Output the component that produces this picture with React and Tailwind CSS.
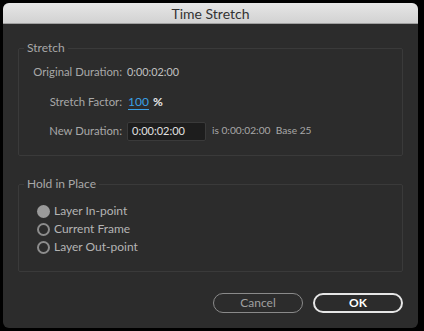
import React from "react";

const font = { fontFamily: "Lato, 'Open Sans', sans-serif" };

function Radio({ checked, label }) {
  return (
    <div className="flex items-center h-[18px]">
      {checked ? (
        <span className="w-[13px] h-[13px] rounded-full bg-[#9a9a9a] shrink-0" />
      ) : (
        <span className="w-[13px] h-[13px] rounded-full border-2 border-[#8c8c8c] shrink-0" />
      )}
      <span className="ml-[4px] text-[12px] text-[#b4b4b4]">{label}</span>
    </div>
  );
}

export default function App() {
  return (
    <div className="w-[424px] h-[331px] bg-black pt-[3px] pl-[3px]" style={font}>
      <div className="w-[415px] h-[325px] bg-[#2c2c2c] rounded-[6px] overflow-hidden flex flex-col">
        <div className="h-[21px] bg-gradient-to-b from-[#e6e6e6] to-[#d2d2d2] border-b border-[#a0a0a0] flex items-center justify-center">
          <span className="text-[14px] text-[#333333]">Time Stretch</span>
        </div>
        <div className="px-[15px] pt-[24px] flex flex-col">
          <div className="relative h-[108px] border border-[#3a3a3a] rounded-[2px]">
            <span className="absolute -top-[9px] left-[5px] px-[3px] bg-[#2c2c2c] text-[12px] text-[#a8a8a8] leading-[16px]">Stretch</span>
            <div className="pt-[15px] flex flex-col">
              <div className="flex items-center h-[16px]">
                <span className="w-[103px] text-right text-[11.3px] text-[#a8a8a8]">Original Duration:</span>
                <span className="ml-[5px] text-[10.8px] text-[#c0c0c0]">0:00:02:00</span>
              </div>
              <div className="flex items-center h-[16px] mt-[14px]">
                <span className="w-[103px] text-right text-[11.3px] text-[#a8a8a8]">Stretch Factor:</span>
                <span className="ml-[6px] text-[12px] text-[#3aa0e6] border-b border-[#3aa0e6] leading-[14px]">100</span>
                <span className="ml-[4px] text-[12px] text-[#e8e8e8] font-bold">%</span>
              </div>
              <div className="flex items-center h-[18px] mt-[12px]">
                <span className="w-[103px] text-right text-[11.3px] text-[#a8a8a8]">New Duration:</span>
                <span className="ml-[5px] w-[79px] h-[19px] bg-[#1d1d1d] border border-[#3a3a3a] rounded-[2px] flex items-center pl-[4px] text-[11px] text-[#e0e0e0]">0:00:02:00</span>
                <span className="ml-[6px] text-[10.2px] text-[#a8a8a8]">is 0:00:02:00&nbsp;&nbsp;Base 25</span>
              </div>
            </div>
          </div>
          <div className="relative h-[88px] mt-[28px] border border-[#3a3a3a] rounded-[2px]">
            <span className="absolute -top-[9px] left-[5px] px-[3px] bg-[#2c2c2c] text-[12px] text-[#a8a8a8] leading-[16px]">Hold in Place</span>
            <div className="pt-[17px] pl-[18px] flex flex-col">
              <Radio checked label="Layer In-point" />
              <Radio label="Current Frame" />
              <Radio label="Layer Out-point" />
            </div>
          </div>
          <div className="flex justify-end gap-[10px] mt-[21px] pr-0">
            <button className="w-[90px] h-[20px] rounded-full border-[1.5px] border-[#8a8a8a] text-[12px] text-[#a0a0a0] flex items-center justify-center">Cancel</button>
            <button className="w-[90px] h-[20px] rounded-full border-2 border-[#e6e6e6] text-[12px] text-white font-bold flex items-center justify-center">OK</button>
          </div>
        </div>
      </div>
    </div>
  );
}
